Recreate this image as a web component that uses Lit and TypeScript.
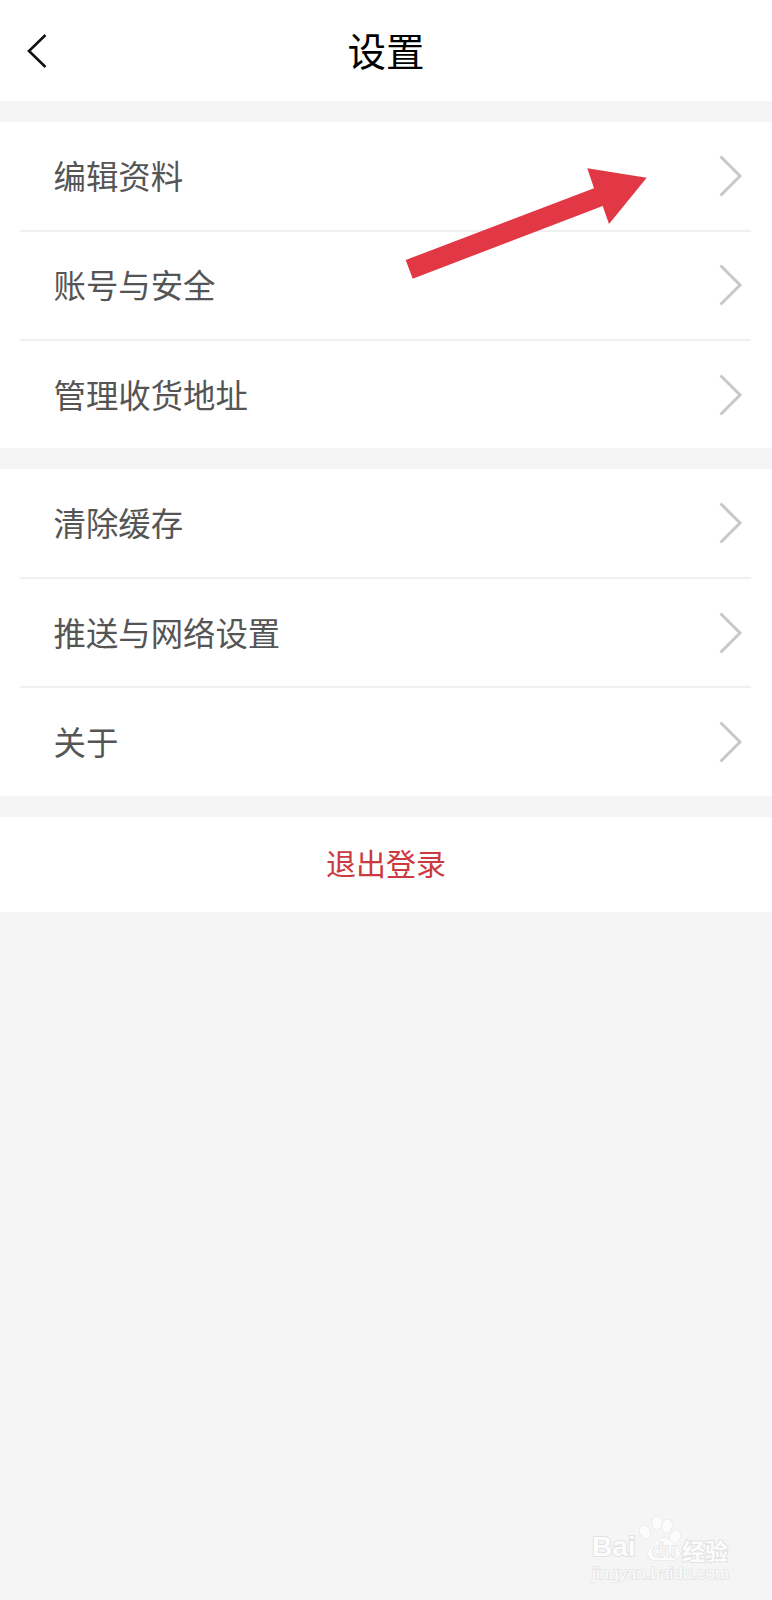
import { LitElement, html, css, svg } from "lit";
import { customElement } from "lit/decorators.js";

const chevron = html`<svg class="chev" width="24" height="42" viewBox="0 0 24 42" fill="none"><path d="M1.5 1.5 L21 21 L1.5 40.5" stroke="#c8c8c8" stroke-width="3"/></svg>`;

const groups = [
  ["编辑资料", "账号与安全", "管理收货地址"],
  ["清除缓存", "推送与网络设置", "关于"],
];

@customElement("app-root")
export class AppRoot extends LitElement {
  static styles = css`
    :host {
      display: block;
      position: relative;
      width: 772px;
      height: 1600px;
      overflow: hidden;
      background: #f5f5f5;
      font-family: "Noto Sans CJK SC", "Noto Sans", sans-serif;
    }
    .header {
      height: 101px;
      background: #fff;
      display: grid;
      grid-template-columns: 1fr auto 1fr;
      align-items: center;
      padding: 0 27px;
      box-sizing: border-box;
      margin-bottom: 21px;
    }
    .back { display: block; }
    .title {
      font-size: 38.5px;
      line-height: 1;
      color: #000;
      font-weight: 400;
      margin-bottom: 3px;
    }
    .group {
      background: #fff;
      height: 326.3px;
      margin-bottom: 21px;
      padding: 0 21px 0 20px;
      display: flex;
      flex-direction: column;
    }
    .row {
      height: 109.5px;
      flex: none;
      box-sizing: border-box;
      display: flex;
      align-items: center;
      justify-content: space-between;
      padding: 0 8px 0 33.5px;
      border-bottom: 2px solid #f0f0f0;
      font-size: 32.4px;
      color: #555555;
    }
    .row span { margin-bottom: 3px; }
    .row:last-child { border-bottom: 0; flex: 1; height: auto; }
    .logout {
      height: 95px;
      box-sizing: border-box;
      padding-bottom: 4px;
      background: #fff;
      display: flex;
      align-items: center;
      justify-content: center;
      font-size: 30px;
      color: #cb3a40;
    }
    .arrow { position: absolute; left: 400px; top: 160px; }
    .mark {
      position: absolute;
      left: 590px;
      top: 1510px;
      width: 144px;
      height: 76px;
      color: #fcfcfc;
      -webkit-text-stroke: 2px #e2e2e2;
      paint-order: stroke fill;
      font-family: "Liberation Sans", sans-serif;
    }
    .bai {
      position: absolute;
      left: 2px;
      top: 19px;
      font-size: 28px;
      line-height: 36px;
      font-weight: 700;
    }
    .cn {
      position: absolute;
      left: 92px;
      top: 25px;
      font-size: 23px;
      line-height: 30px;
      font-weight: 700;
      font-family: "Noto Sans CJK SC", sans-serif;
    }
    .url {
      position: absolute;
      left: 2px;
      top: 54px;
      font-size: 17px;
      line-height: 20px;
      white-space: nowrap;
      -webkit-text-stroke: 1.6px #e4e4e4;
    }
    .paw { position: absolute; left: 48px; top: 4px; }
    .paw-shape { fill: #fcfcfc; stroke: #e2e2e2; stroke-width: 1; }
    .paw-text {
      fill: #f6f6f6;
      stroke: #d6d6d6;
      stroke-width: 0.9;
      font-size: 20px;
      font-weight: 700;
      -webkit-text-stroke: 0;
    }
  `;

  render() {
    return html`
      <div class="header">
        <svg class="back" width="20" height="34" viewBox="0 0 20 34" fill="none"><path d="M18.5 1 L2 17 L18.5 33" stroke="#111" stroke-width="2.6"/></svg>
        <div class="title">设置</div>
        <div></div>
      </div>
      ${groups.map(
        (g) => html`<div class="group">
          ${g.map((t) => html`<div class="row"><span>${t}</span>${chevron}</div>`)}
        </div>`
      )}
      <div class="logout">退出登录</div>

      <svg class="arrow" width="250" height="125" viewBox="400 160 250 125">
        <polygon points="405.7,260 594,188.3 587.3,168.3 646.7,177.7 609,224 602.7,206 412.7,278.7" fill="#e23745"/>
      </svg>

      <div class="mark">
        <span class="bai">Bai</span>
        <svg class="paw" width="46" height="50" viewBox="0 0 46 50">
          ${svg`<g class="paw-shape">
            <ellipse cx="7" cy="18" rx="5" ry="6.5" transform="rotate(-25 7 18)"/>
            <ellipse cx="19" cy="9" rx="5" ry="6.5"/>
            <ellipse cx="29" cy="12" rx="5" ry="6.5" transform="rotate(10 29 12)"/>
            <ellipse cx="37" cy="23" rx="5" ry="6.5" transform="rotate(25 37 23)"/>
            <path d="M26 24 C33 24 43 36 42 41 C40 48 32 46 26 46 C20 46 11 48 10 41 C9 36 19 24 26 24 Z"/>
          </g>
          <text class="paw-text" x="26" y="43" text-anchor="middle">du</text>`}
        </svg>
        <span class="cn">经验</span>
        <span class="url">jingyan.baidu.com</span>
      </div>
    `;
  }
}
